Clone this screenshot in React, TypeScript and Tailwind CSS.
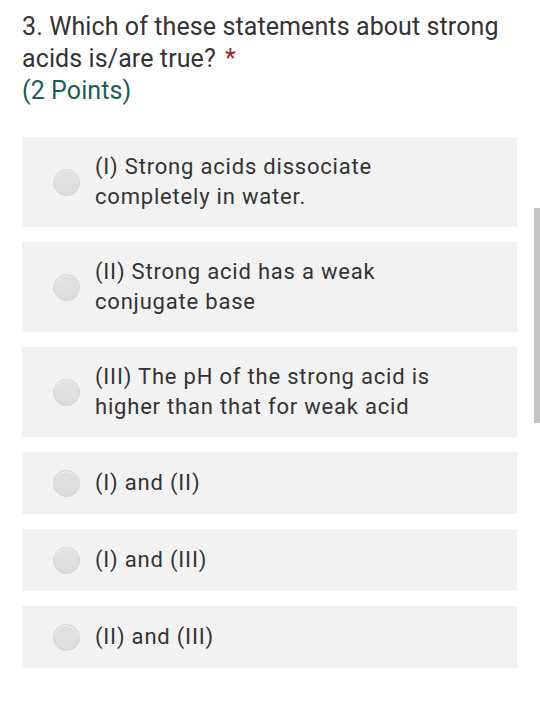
const options = [
  "(I) Strong acids dissociate completely in water.",
  "(II) Strong acid has a weak conjugate base",
  "(III) The pH of the strong acid is higher than that for weak acid",
  "(I) and (II)",
  "(I) and (III)",
  "(II) and (III)",
]

function Radio() {
  return (
    <span className="w-[27px] h-[27px] shrink-0 rounded-full border border-[#d2d2d2] bg-gradient-to-b from-[#e2e2e2] to-[#dcdcdc] shadow-[inset_0_1px_1px_rgba(255,255,255,0.6)]" />
  )
}

export default function App() {
  return (
    <div className="relative w-[540px] h-[711px] bg-white overflow-hidden font-['Roboto',sans-serif]">
      <div className="pl-[22px] pr-[23px] pt-[11px]">
        <h2 className="text-[25px] leading-[32px] tracking-[0.1px] text-[#333333]">
          3. Which of these statements about strong acids is/are true?
          <span className="ml-[9px] text-[#a52020]">*</span>
        </h2>
        <div className="text-[25px] leading-[32px] tracking-[0.1px] text-[#1d5c56]">(2 Points)</div>

        <div className="mt-[30px] flex flex-col gap-[15px]">
          {options.map((o) => (
            <div key={o} className="flex items-center min-h-[62px] bg-[#f2f2f2] py-[15px] pl-[31px] pr-[52px]">
              <Radio />
              <span className="ml-[15px] text-[22px] leading-[30px] tracking-[0.8px] text-[#333333]">{o}</span>
            </div>
          ))}
        </div>
      </div>

      {/* scroll bar */}
      <div className="absolute right-0 top-[208px] w-[6px] h-[215px] bg-[#c4c4c4]" />
    </div>
  )
}
